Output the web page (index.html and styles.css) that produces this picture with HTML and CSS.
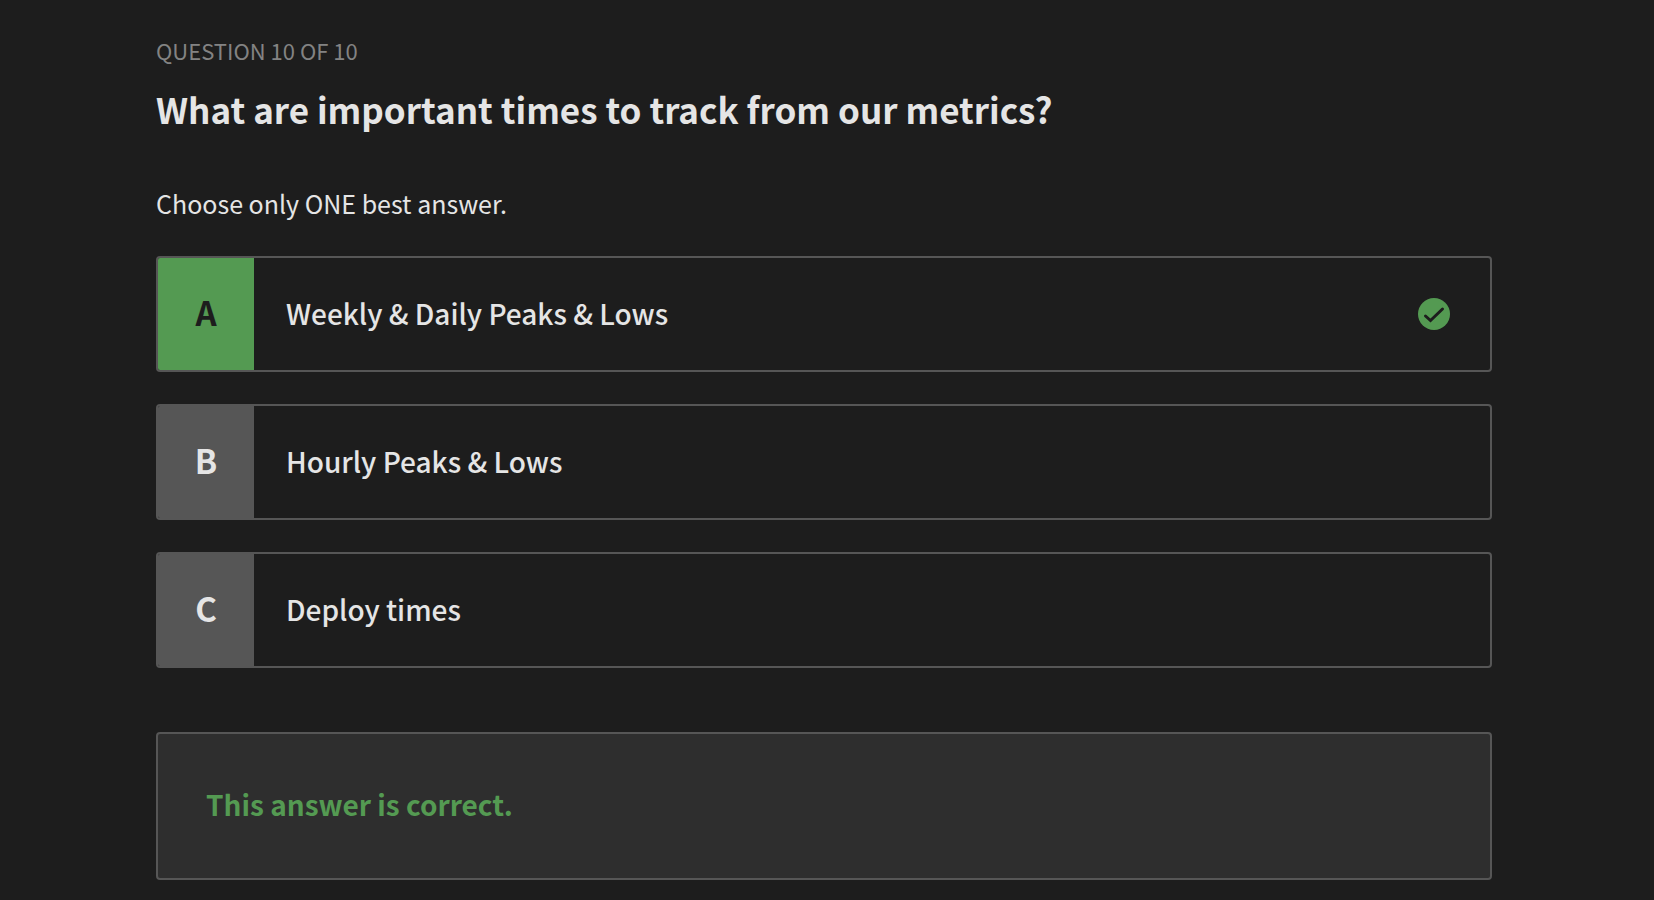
FILE: index.html
```html
<!DOCTYPE html>
<html lang="en">
<head>
<meta charset="utf-8">
<meta name="viewport" content="width=device-width, initial-scale=1">
<title>Question 10 of 10</title>
<link rel="stylesheet" href="styles.css">
</head>
<body>
<main class="quiz">
  <p class="progress">QUESTION 10 OF 10</p>
  <h1 class="question">What are important times to track from our metrics?</h1>
  <p class="hint">Choose only ONE best answer.</p>
  <div class="answers">
    <button type="button" class="answer correct">
      <span class="letter">A</span>
      <span class="label">Weekly &amp; Daily Peaks &amp; Lows</span>
      <svg class="check" viewBox="0 0 32 32" aria-hidden="true"><circle cx="16" cy="16" r="16"/><path d="M7.5 18l5 4.5L24.5 11"/></svg>
    </button>
    <button type="button" class="answer">
      <span class="letter">B</span>
      <span class="label">Hourly Peaks &amp; Lows</span>
    </button>
    <button type="button" class="answer">
      <span class="letter">C</span>
      <span class="label">Deploy times</span>
    </button>
  </div>
  <section class="result" role="status">
    <p class="verdict">This answer is correct.</p>
  </section>
</main>
</body>
</html>
```
FILE: styles.css
```css
* { box-sizing: border-box; }

body {
  margin: 0;
  background: #1d1d1d;
  color: #e5e5e5;
  font-family: "Noto Sans CJK SC", "Noto Sans", sans-serif;
  font-weight: 400;
}

.quiz {
  margin: 0 162px 0 156px;
  padding: 34px 0 16px;
}

.progress, .question, .hint, .verdict { margin: 0; }

.progress {
  color: #838383;
  font-size: 22px;
  line-height: 32px;
}

.question {
  margin-top: 16px;
  font-size: 35px;
  line-height: 54px;
  font-weight: 700;
}

.hint {
  margin-top: 48px;
  font-size: 25px;
  line-height: 38px;
}

.answers {
  display: grid;
  gap: 32px;
  margin-top: 34px;
}

.answer {
  display: flex;
  align-items: center;
  height: 116px;
  padding: 0;
  overflow: hidden;
  border: 2px solid #565656;
  border-radius: 4px;
  background: transparent;
  color: inherit;
  font: inherit;
  text-align: left;
}

.letter {
  display: flex;
  align-items: center;
  justify-content: center;
  align-self: stretch;
  width: 96px;
  padding-bottom: 4px;
  background: #565656;
  font-size: 33px;
  font-weight: 700;
}

.correct .letter {
  background: #549a52;
  color: #1d1d1d;
}

.label {
  flex: 1;
  padding: 0 32px 2px;
  font-size: 28px;
  font-weight: 500;
}

.check {
  width: 32px;
  height: 32px;
  margin-right: 40px;
  fill: #549a52;
}

.check path {
  fill: none;
  stroke: #1d1d1d;
  stroke-width: 3;
  stroke-linecap: round;
}

.result {
  margin-top: 64px;
  padding: 46px 48px 50px;
  border: 2px solid #565656;
  border-radius: 4px;
  background: #2e2e2e;
}

.verdict {
  color: #549a52;
  font-size: 28px;
  line-height: 48px;
  font-weight: 700;
}
```
